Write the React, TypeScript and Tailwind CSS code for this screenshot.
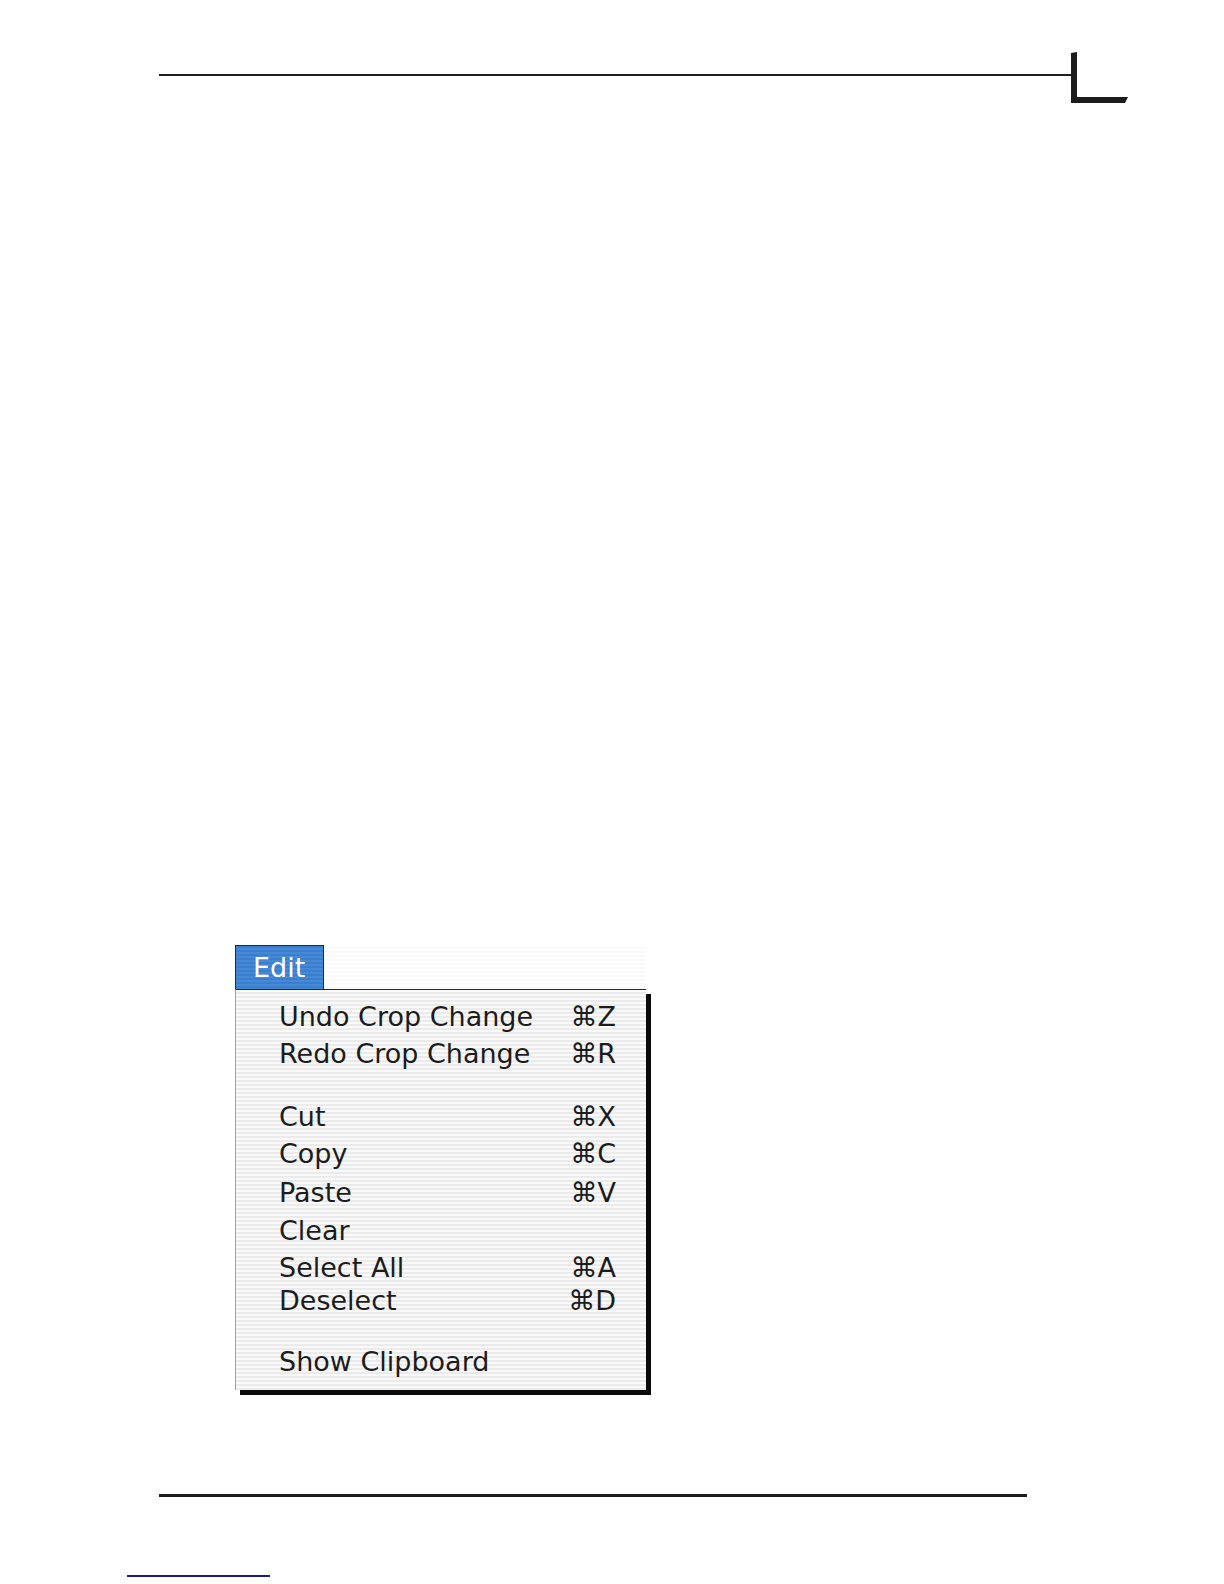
type MenuItem = {
  label: string
  shortcut?: string
  h: string
  gap?: string
}

const items: MenuItem[] = [
  { label: 'Undo Crop Change', shortcut: 'Z', h: 'h-[37px]' },
  { label: 'Redo Crop Change', shortcut: 'R', h: 'h-[37px]', gap: 'h-[26px]' },
  { label: 'Cut', shortcut: 'X', h: 'h-[37px]' },
  { label: 'Copy', shortcut: 'C', h: 'h-[39px]' },
  { label: 'Paste', shortcut: 'V', h: 'h-[38px]' },
  { label: 'Clear', h: 'h-[37px]' },
  { label: 'Select All', shortcut: 'A', h: 'h-[33px]' },
  { label: 'Deselect', shortcut: 'D', h: 'h-[37px]', gap: 'h-[24px]' },
  { label: 'Show Clipboard', h: 'h-[37px]' },
]

function CornerMark() {
  return (
    <svg width="60" height="52" viewBox="0 0 60 52" className="shrink-0">
      <polygon points="0,1 6,0 6,45 57,45 54,51 0,51" fill="#1c1c1c" />
    </svg>
  )
}

function EditMenu() {
  return (
    <div className="flex flex-col w-[411px] font-['DejaVu_Sans',sans-serif] text-[27px]">
      {/* menu bar with the open Edit title */}
      <div className="flex h-[44px]">
        <div className="w-[89px] h-full border-t border-l border-r border-[#1e2a3a] bg-[repeating-linear-gradient(to_bottom,#3a7ecf_0px,#3a7ecf_2px,#4889d6_2px,#4889d6_4px)] text-white pl-[17px] flex items-center leading-none">
          Edit
        </div>
        <div className="flex-1 h-full bg-[repeating-linear-gradient(to_bottom,#ffffff_0px,#ffffff_2px,#fafafa_2px,#fafafa_4px)]" />
      </div>

      {/* drop-down panel */}
      <div className="h-[401px] border-t border-t-[#2a2a2a] border-l border-l-[#a0a0a0] pt-[8px] pl-[43px] pr-[30px] text-[#1c1c1c] leading-[37px] shadow-[5px_5px_0_#0a0a0a] bg-[repeating-linear-gradient(to_bottom,#fafafa_0px,#fafafa_2px,#ebebeb_2px,#ebebeb_4px)]">
        {items.map((item) => (
          <div key={item.label}>
            <div className={`flex justify-between items-start ${item.h}`}>
              <span>{item.label}</span>
              {item.shortcut && <span>⌘{item.shortcut}</span>}
            </div>
            {item.gap && <div className={item.gap} />}
          </div>
        ))}
      </div>
    </div>
  )
}

export default function App() {
  return (
    <div className="w-[1224px] h-[1584px] bg-white flex flex-col overflow-hidden">
      {/* page header rule with corner mark */}
      <div className="flex items-start pt-[52px] pl-[159px]">
        <div className="w-[912px] h-[2px] mt-[22px] bg-[#1e1e1e]" />
        <CornerMark />
      </div>

      <div className="mt-[841px] ml-[235px]">
        <EditMenu />
      </div>

      {/* footer rule */}
      <div className="mt-[104px] ml-[159px] w-[868px] h-[3px] bg-[#1e1e1e]" />

      {/* link underline */}
      <div className="mt-[78px] ml-[127px] w-[143px] h-[2px] bg-[#1a1a8c]" />
    </div>
  )
}
